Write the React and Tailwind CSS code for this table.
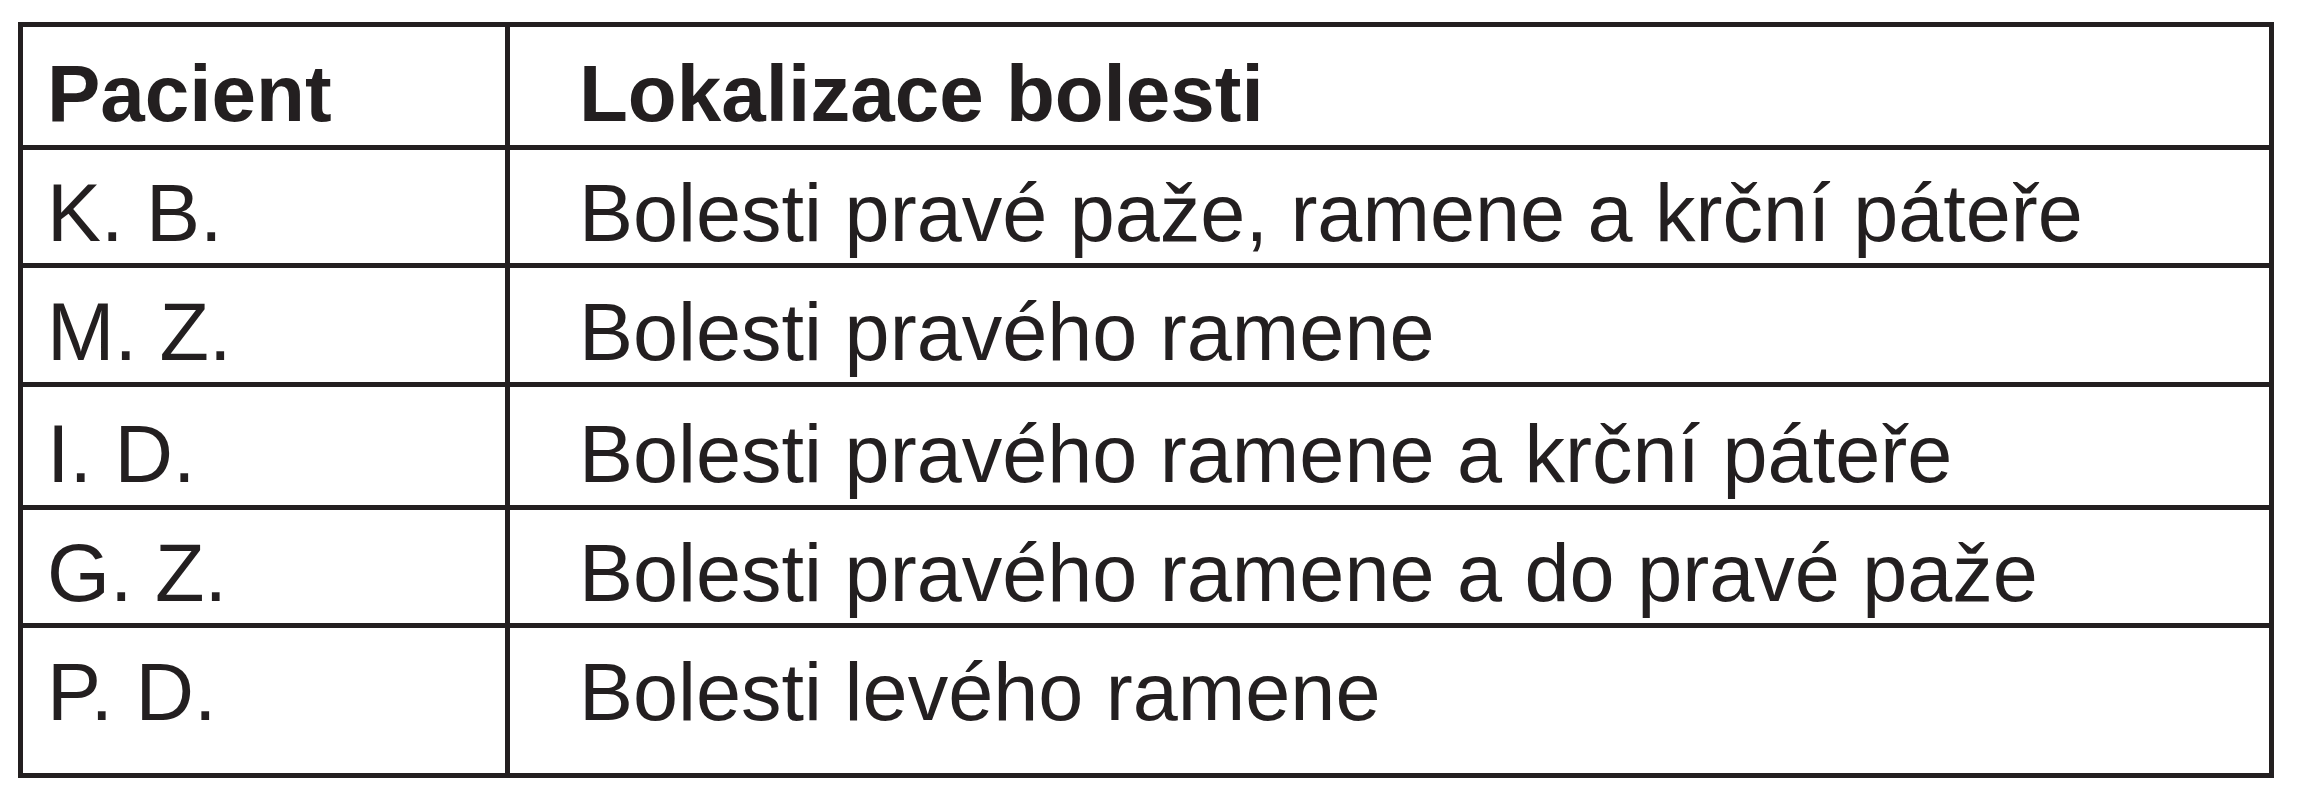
const ROWS = [
  { who: 'K. B.', where: 'Bolesti pravé paže, ramene a krční páteře', h: 'h-[118px]', pt: 'pt-[17px]' },
  { who: 'M. Z.', where: 'Bolesti pravého ramene', h: 'h-[119px]', pt: 'pt-[18px]' },
  { who: 'I. D.', where: 'Bolesti pravého ramene a krční páteře', h: 'h-[123px]', pt: 'pt-[21px]' },
  { who: 'G. Z.', where: 'Bolesti pravého ramene a do pravé paže', h: 'h-[118px]', pt: 'pt-[17px]' },
  { who: 'P. D.', where: 'Bolesti levého ramene', h: 'h-[145px]', pt: 'pt-[18px]' },
]

// heights include the 5px bottom rule (border-box)
function Row({ left, right, h, pt, bold, last }) {
  const txt = bold ? 'font-bold text-[80px]' : 'text-[81px]'
  return (
    <div className={`flex ${h} ${last ? '' : 'border-b-[5px] border-[#231f20]'}`}>
      <div className={`w-[487px] shrink-0 border-r-[5px] border-[#231f20] pl-[24px] ${pt}`}>
        <span className={txt}>{left}</span>
      </div>
      <div className={`flex-1 pl-[69px] ${pt}`}>
        <span className={txt}>{right}</span>
      </div>
    </div>
  )
}

export default function App() {
  return (
    <div className="w-[2309px] h-[800px] bg-white pt-[22px] pl-[18px]">
      <div
        className="w-[2256px] border-[5px] border-[#231f20] text-[#231f20] leading-[92px] whitespace-nowrap"
        style={{ fontFamily: '"Liberation Sans", Arial, sans-serif' }}
      >
        <Row left="Pacient" right="Lokalizace bolesti" h="h-[123px]" pt="pt-[21px]" bold />
        {ROWS.map((r, i) => (
          <Row
            key={r.who}
            left={r.who}
            right={r.where}
            h={r.h}
            pt={r.pt}
            last={i === ROWS.length - 1}
          />
        ))}
      </div>
    </div>
  )
}
